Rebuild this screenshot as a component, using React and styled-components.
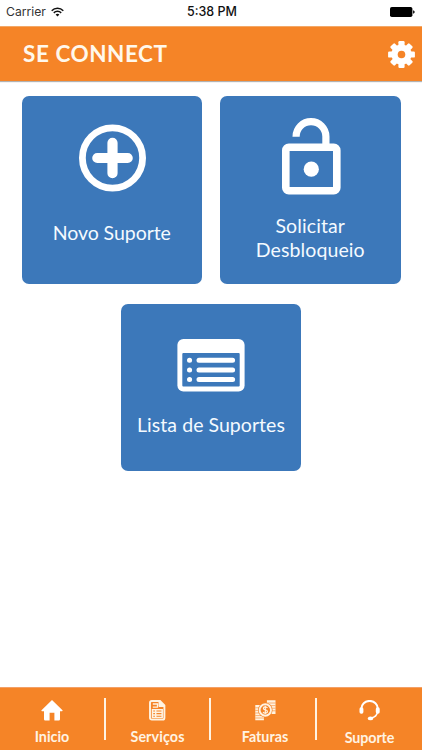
import styled, { createGlobalStyle } from "styled-components";

const App = () => {
  return (
    <Screen>
      <GlobalStyle />
      <StatusBar>
        <Carrier>
          Carrier
          <WifiIcon />
        </Carrier>
        <Clock>5:38 PM</Clock>
        <BatteryIcon />
      </StatusBar>

      <Header>
        <Title>SE CONNECT</Title>
        <SettingsButton aria-label="Configurações">
          <GearIcon />
        </SettingsButton>
      </Header>

      <Main>
        <CardRow>
          <Card $top={28}>
            <PlusIcon />
            <CardLabel $gap={29} $spacing={-0.05}>
              Novo Suporte
            </CardLabel>
          </Card>
          <Card $top={22}>
            <UnlockIcon />
            <CardLabel $gap={19} $spacing={0.1}>
              Solicitar
              <br />
              Desbloqueio
            </CardLabel>
          </Card>
        </CardRow>
        <CardRow>
          <Card $height={167} $top={35}>
            <ListIcon />
            <CardLabel $gap={21} $spacing={0.05}>
              Lista de Suportes
            </CardLabel>
          </Card>
        </CardRow>
      </Main>

      <TabBar>
        <Tab $width={104}>
          <HomeIcon />
          <TabLabel>Inicio</TabLabel>
        </Tab>
        <Divider />
        <Tab $width={103}>
          <DocumentIcon />
          <TabLabel $spacing={0.1}>Serviços</TabLabel>
        </Tab>
        <Divider />
        <Tab $width={104} $shift={4}>
          <MoneyIcon />
          <TabLabel>Faturas</TabLabel>
        </Tab>
        <Divider />
        <Tab $width={105}>
          <HeadsetIcon />
          <TabLabel $gap={7} $spacing={-0.1}>
            Suporte
          </TabLabel>
        </Tab>
      </TabBar>
    </Screen>
  );
};
export default App;

const WifiIcon = () => (
  <svg width="13" height="10" viewBox="0 0 13 10" fill="none" stroke="#111" strokeWidth="1.5">
    <path d="M0.7 3.7a8.2 8.2 0 0 1 11.6 0" />
    <path d="M2.8 5.9a5.2 5.2 0 0 1 7.4 0" />
    <path d="M6.5 9.6 4.6 7.6a2.8 2.8 0 0 1 3.8 0Z" fill="#111" stroke="none" />
  </svg>
);

const BatteryIcon = () => (
  <svg width="25" height="10" viewBox="0 0 25 10">
    <rect x="0" y="0" width="22.4" height="10" rx="1.8" />
    <path d="M23.1 3.3q1.6 0.5 1.6 1.7t-1.6 1.7Z" />
  </svg>
);

const GearIcon = () => (
  <svg width="27" height="27" viewBox="-13.5 -13.5 27 27">
    <g fill="#fff">
      {[0, 45, 90, 135].map(angle => (
        <rect key={angle} x="-3.1" y="-13.4" width="6.2" height="26.8" rx="1.2" transform={`rotate(${angle})`} />
      ))}
    </g>
    <circle r="6.9" fill="none" stroke="#fff" strokeWidth="6.4" />
    <circle r="3.8" fill="#f58427" />
  </svg>
);

const PlusIcon = () => (
  <svg width="68" height="68" viewBox="-0.5 0 68 68" fill="none" stroke="#fff" strokeLinecap="round">
    <circle cx="34" cy="34" r="30.1" strokeWidth="6.8" />
    <path d="M18.8 34h30.4M34 18.8v30.4" strokeWidth="10.2" />
  </svg>
);

const UnlockIcon = () => (
  <svg width="62" height="77" viewBox="-2.1 0 62 77" fill="none" stroke="#fff">
    <rect x="4.7" y="29.2" width="51" height="43.6" rx="3" strokeWidth="7.6" />
    <path d="M15 18.7v-.2a14.9 14.9 0 0 1 29.8 0V27" strokeWidth="7.2" />
    <circle cx="30.2" cy="51.2" r="7.6" fill="#fff" stroke="none" />
  </svg>
);

const ListIcon = () => (
  <svg width="68" height="53" viewBox="0 0 68 53">
    <rect x="0.4" width="67.2" height="52.6" rx="6" fill="#fff" />
    <rect x="5.3" y="14" width="57.4" height="33.6" rx="1" fill="#3c78ba" />
    <g stroke="#fff" strokeWidth="5" strokeLinecap="round">
      <path d="M12.5 21.3h.1M22 21.3h33.6" />
      <path d="M12.5 30.9h.1M22 30.9h33.6" />
      <path d="M12.5 40.5h.1M22 40.5h33.6" />
    </g>
  </svg>
);

const HomeIcon = () => (
  <svg width="22" height="21" viewBox="0 0 22 21" fill="#fff">
    <path d="M11 0 21.5 10.3q.5 1-.6 1H19v8q0 1.2-1.2 1.2h-4.4v-7.7H8.6v7.7H4.2Q3 20.5 3 19.3v-8H1.1q-1.1 0-.6-1Z" />
  </svg>
);

const DocumentIcon = () => (
  <svg width="17" height="21" viewBox="0 0 17 21" fill="none" stroke="#fff3e2">
    <path d="M2.7 1H11L15.4 5.4V17.7q0 1.9-1.8 1.9H2.9Q1 19.6 1 17.7V2.7Q1 1 2.7 1Z" strokeWidth="1.9" />
    <path d="M10 1v5.5h5.5Z" fill="#fff3e2" />
    <path d="M3.8 4h4.7v3.2H3.8" strokeWidth="1.3" />
    <path d="M3.5 9.7h9.7v7.8H3.5ZM6.7 9.7v7.8M3.5 12.3h9.7M3.5 14.9h9.7" strokeWidth="1.5" />
  </svg>
);

const MoneyIcon = () => (
  <svg width="21" height="21" viewBox="0.6 0.2 21 21">
    <path d="M12.5.4h8.6v13.9h-8.6ZM.9 5.2h8.6v15.2H.9Z" fill="#fff3e2" />
    <path
      d="M12.5 3.2h8.6M12.5 5.8h8.6M12.5 8.4h8.6M12.5 11h8.6M.9 8h8.6M.9 10.6h8.6M.9 13.2h8.6M.9 15.8h8.6M.9 18.2h8.6"
      stroke="#f58427"
      strokeWidth="0.6"
    />
    <circle cx="10.9" cy="10.2" r="7.3" fill="#f58427" />
    <circle cx="10.9" cy="10.2" r="5.7" fill="none" stroke="#fff3e2" strokeWidth="1.9" />
    <path
      d="M13 8.3q-.5-1.2-2.1-1.2-1.9 0-1.9 1.4t1.9 1.6q2.1.2 2.1 1.7t-2.1 1.5q-1.6 0-2.2-1.2M10.9 6v8.4"
      fill="none"
      stroke="#fff3e2"
      strokeWidth="1.2"
    />
  </svg>
);

const HeadsetIcon = () => (
  <svg width="22" height="21" viewBox="0.5 0.6 22 21" fill="none" stroke="#fff">
    <path d="M2.8 9.5a8.3 8 0 0 1 16.6 0" strokeWidth="2" />
    <path d="M19 12.5q-.6 4.9-6.2 6" strokeWidth="1.5" />
    <rect x="1" y="7.8" width="3.9" height="6.6" rx="1.7" fill="#fff" stroke="none" />
    <rect x="17.3" y="7.8" width="3.9" height="6.6" rx="1.7" fill="#fff" stroke="none" />
    <ellipse cx="12" cy="19" rx="2.7" ry="1.9" fill="#fff" stroke="none" />
  </svg>
);

const GlobalStyle = createGlobalStyle`
  * {
    box-sizing: border-box;
  }

  body {
    margin: 0;
    background: #fff;
    font-family: Lato, "Open Sans", sans-serif;
  }

  svg {
    display: block;
    flex-shrink: 0;
  }
`;

const Screen = styled.div`
  height: 750px;
  display: flex;
  flex-direction: column;
  overflow: hidden;
`;

const StatusBar = styled.div`
  height: 26px;
  padding: 0 7px 3px 6px;
  display: grid;
  grid-template-columns: 1fr auto 1fr;
  align-items: center;
  font-family: Inter, "Liberation Sans", sans-serif;
  font-size: 12.2px;
  color: #111;

  > svg {
    justify-self: end;
  }
`;

const Carrier = styled.div`
  display: flex;
  align-items: center;
  gap: 5px;
  color: #333;
`;

const Clock = styled.div`
  padding-left: 3px;
  font-weight: 500;
  font-size: 12.5px;
`;

const Header = styled.header`
  height: 55px;
  padding: 0 7px 0 23px;
  display: flex;
  align-items: center;
  justify-content: space-between;
  background: #f58427;
  border-top: 1px solid #f3a867;
  box-shadow: 0 1px 1px rgba(0, 0, 0, 0.3);
`;

const Title = styled.h1`
  margin: 0 0 1px;
  font-size: 22.5px;
  font-weight: 700;
  letter-spacing: 0.55px;
  color: #fff8ec;
`;

const SettingsButton = styled.button`
  padding: 0;
  border: 0;
  background: none;
`;

const Main = styled.main`
  flex: 1;
  padding-top: 15px;
  display: flex;
  flex-direction: column;
  gap: 20px;
`;

const CardRow = styled.div`
  display: flex;
  justify-content: center;
  gap: 18px;
`;

const Card = styled.div`
  width: 180.5px;
  height: ${({ $height }) => $height || 188}px;
  padding-top: ${({ $top }) => $top}px;
  display: flex;
  flex-direction: column;
  align-items: center;
  border-radius: 7px;
  background: #3c78ba;
`;

const CardLabel = styled.span`
  margin-top: ${({ $gap }) => $gap}px;
  font-size: 19.5px;
  line-height: 23.5px;
  letter-spacing: ${({ $spacing }) => $spacing}px;
  text-align: center;
  white-space: nowrap;
  color: #f4faff;
`;

const TabBar = styled.nav`
  height: 63px;
  padding-top: 10px;
  display: flex;
  background: #f58427;
  border-top: 1px solid #f3a067;
`;

const Tab = styled.div`
  width: ${({ $width }) => $width}px;
  padding-top: 2px;
  padding-left: ${({ $shift }) => $shift || 0}px;
  display: flex;
  flex-direction: column;
  align-items: center;
`;

const TabLabel = styled.span`
  margin-top: ${({ $gap }) => $gap || 6}px;
  font-size: 14.3px;
  line-height: 19px;
  font-weight: 700;
  letter-spacing: ${({ $spacing }) => $spacing || 0}px;
  color: #fff3e2;
`;

const Divider = styled.div`
  width: 2px;
  height: 42px;
  flex-shrink: 0;
  background: #fff3e2;
`;
